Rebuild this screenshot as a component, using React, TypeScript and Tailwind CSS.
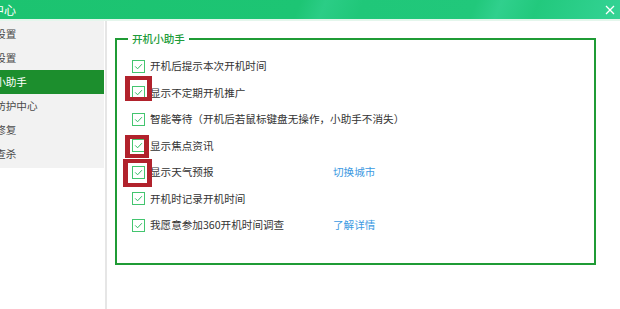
import React from 'react';

const menu = [
  { label: '常规设置' },
  { label: '弹窗设置' },
  { label: '开机小助手', active: true },
  { label: '安全防护中心' },
  { label: '系统修复' },
  { label: '木马查杀' },
];

const options = [
  { label: '开机后提示本次开机时间' },
  { label: '显示不定期开机推广' },
  { label: '智能等待（开机后若鼠标键盘无操作，小助手不消失）' },
  { label: '显示焦点资讯' },
  { label: '显示天气预报', link: '切换城市' },
  { label: '开机时记录开机时间' },
  { label: '我愿意参加360开机时间调查', link: '了解详情' },
];

function Check() {
  return (
    <span className="w-[13px] h-[13px] shrink-0 border border-[#43c56f] bg-white flex items-center justify-center">
      <svg width="11" height="11" viewBox="0 0 11 11" fill="none">
        <path d="M2.2 5.4 L4.6 7.8 L8.9 3.2" stroke="#2fbd62" strokeWidth="1" />
      </svg>
    </span>
  );
}

export default function App() {
  return (
    <div
      className="relative w-[620px] h-[309px] overflow-hidden bg-white"
      style={{ fontFamily: '"Noto Sans CJK SC", "Noto Sans", sans-serif' }}
    >
      {/* title bar */}
      <div className="h-[19px] flex items-center justify-between bg-[linear-gradient(112deg,#1cc370_0%,#1dc574_48%,#2bcd86_52%,#20c779_58%,#21c87b_76%,#30d08d_80%,#22c97d_86%,#34d395_100%)] text-white">
        <span className="ml-[-32px] text-[12px] leading-none">设置中心</span>
        <svg width="10" height="10" viewBox="0 0 10 10" className="mr-[5px]">
          <path d="M1 1 L9 9 M9 1 L1 9" stroke="#ffffff" strokeWidth="1.3" />
        </svg>
      </div>
      <div className="h-[2px] bg-[#e4f6ec]" />

      <div className="flex h-[288px]">
        {/* sidebar */}
        <div className="w-[104px] shrink-0">
          <div className="bg-[#f2f2f2] pt-[1px] pb-[2px] overflow-hidden">
            {menu.map((m) => (
              <div
                key={m.label}
                className={`h-[24px] flex items-center text-[10.6px] whitespace-nowrap ${
                  m.active ? 'bg-[#1c8e2d] text-white' : 'text-[#4a4a4a]'
                }`}
              >
                <span className="ml-[-26px]">{m.label}</span>
              </div>
            ))}
          </div>
        </div>

        {/* main */}
        <div className="flex-1 ml-[1px] border-l-[2px] border-[#e6e6e6]">
          <div className="relative ml-[8px] mt-[17px] w-[481px] h-[227px] border-2 border-[#1f9b35] pt-[13px]">
            <span className="absolute top-[-9px] left-[11px] px-[4px] bg-white text-[10.6px] leading-[16px] font-medium text-[#219c3a]">
              开机小助手
            </span>
            {options.map((o) => (
              <div key={o.label} className="h-[26.5px] flex items-center pl-[15px] text-[10.6px] text-[#333]">
                <Check />
                <span className="ml-[5px] min-w-[183px] whitespace-nowrap">{o.label}</span>
                {o.link && <span className="text-[#3c9ae2]">{o.link}</span>}
              </div>
            ))}
          </div>
        </div>
      </div>

      {/* annotation boxes */}
      <div className="absolute left-[125px] top-[76px] w-[27px] h-[25px] border-x-[5px] border-y-[4px] border-[#b1222c]" />
      <div className="absolute left-[125px] top-[135px] w-[24px] h-[23px] border-x-[5px] border-y-[4px] border-[#b1222c]" />
      <div className="absolute left-[123px] top-[159px] w-[29px] h-[28px] border-x-[5px] border-y-[4px] border-[#b1222c]" />
    </div>
  );
}
